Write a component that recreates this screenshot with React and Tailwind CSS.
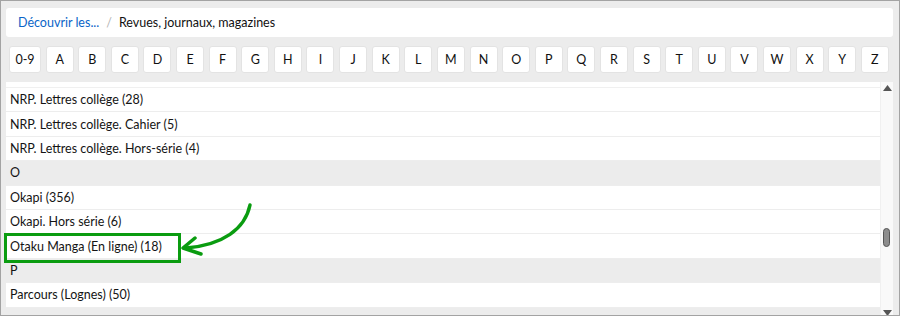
const letters = ["0-9", ..."ABCDEFGHIJKLMNOPQRSTUVWXYZ".split("")];

const rows = [
  { label: "NRP. Lettres collège (28)" },
  { label: "NRP. Lettres collège. Cahier (5)" },
  { label: "NRP. Lettres collège. Hors-série (4)" },
  { label: "O", header: true },
  { label: "Okapi (356)" },
  { label: "Okapi. Hors série (6)" },
  { label: "Otaku Manga (En ligne) (18)" },
  { label: "P", header: true },
  { label: "Parcours (Lognes) (50)" },
];

function App() {
  return (
    <div
      className="relative w-[900px] h-[316px] overflow-hidden border border-[#a3a3a3] bg-[#ececec] pl-[5px] pr-[6px] pt-[7px] text-[#141414]"
      style={{ fontFamily: "Lato, 'Noto Sans', sans-serif" }}
    >
      {/* Breadcrumb */}
      <div className="h-[29px] bg-white rounded-[3px] flex items-center pl-[12px] pt-[2px] text-[12.5px]">
        <span className="text-[#0a64c8]">Découvrir les...</span>
        <span className="mx-[7px] text-[#b5b5b5]">/</span>
        <span className="text-[#111]">Revues, journaux, magazines</span>
      </div>

      {/* Alphabet */}
      <div className="mt-[9px] ml-[3px] mr-[4px] flex justify-between">
        {letters.map((l) => (
          <button
            key={l}
            className={
              "h-[27px] pt-[1px] bg-white border border-[#e3e3e3] rounded-[3px] text-[12.5px] text-[#111] flex items-center justify-center " +
              (l === "0-9" ? "w-[32px]" : "w-[28px]")
            }
          >
            {l}
          </button>
        ))}
      </div>

      {/* List */}
      <div className="mt-[9px] h-[240px] flex bg-white">
        <div className="flex-1 flex flex-col pt-[5px]">
          <div className="h-[1px] bg-[#f0f0f0]" />
          {rows.map((r) => (
            <div
              key={r.label}
              className={
                "h-[24.4px] flex items-center pl-[4px] pt-[2px] text-[12.5px] border-b border-[#ededed] " +
                (r.header ? "bg-[#ececec]" : "bg-white")
              }
            >
              {r.label}
            </div>
          ))}
          <div className="flex-1 bg-[#ececec]" />
        </div>
        {/* Scrollbar */}
        <div className="relative w-[13px] bg-[#f9f9f9] border-l border-[#f0f0f0]">
          <svg className="absolute left-[2px] top-[3px]" width="9" height="6" viewBox="0 0 9 6">
            <path d="M4.5 0 L9 6 L0 6 Z" fill="#555" />
          </svg>
          <div className="absolute left-[2px] top-[146px] w-[7px] h-[19px] rounded-full bg-[#8c8c8c] border border-[#555]" />
          <svg className="absolute left-[2px] top-[228px]" width="9" height="6" viewBox="0 0 9 6">
            <path d="M0 0 L9 0 L4.5 6 Z" fill="#555" />
          </svg>
        </div>
      </div>

      {/* Highlight box */}
      <div className="absolute left-[3px] top-[232px] w-[177px] h-[30px] border-[3px] border-[#0a9c10]" />
      {/* Arrow */}
      <svg className="absolute left-0 top-0 pointer-events-none" width="900" height="316">
        <path
          d="M249 204 C 244 228, 222 244, 185 247"
          fill="none"
          stroke="#0a9c10"
          strokeWidth="3.5"
          strokeLinecap="round"
        />
        <path
          d="M194 237 L182 247 L200 253"
          fill="none"
          stroke="#0a9c10"
          strokeWidth="3.5"
          strokeLinecap="round"
          strokeLinejoin="round"
        />
      </svg>
    </div>
  );
}

export default App;
